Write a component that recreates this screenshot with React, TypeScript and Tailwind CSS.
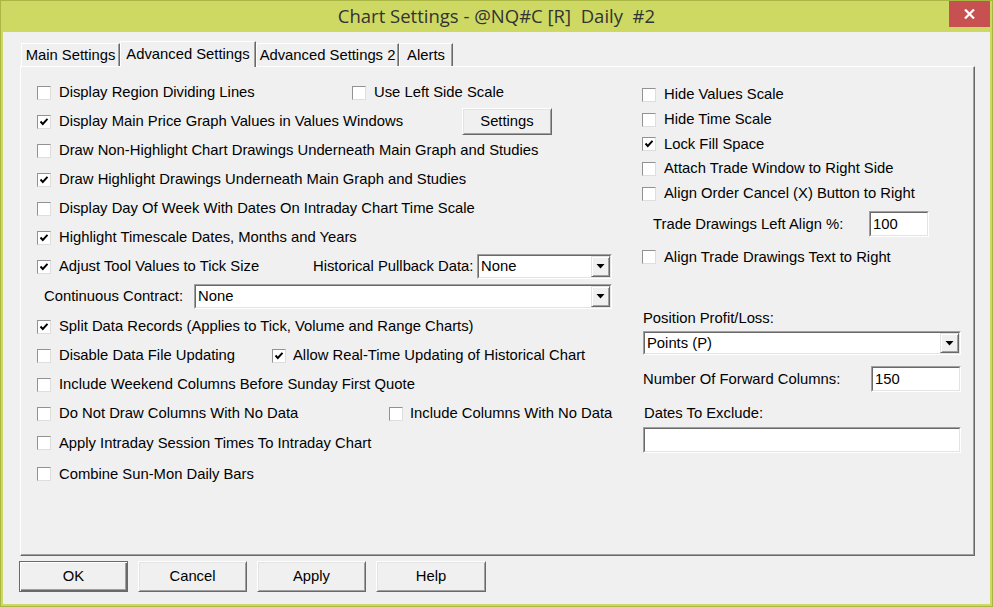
import React from "react";

const FONT = "font-['Liberation_Sans',Arial,sans-serif] text-[14.8px] text-black";

function Check({ checked = false }: { checked?: boolean }) {
  return (
    <span className="w-[14px] h-[14px] shrink-0 bg-white border border-t-[#929292] border-l-[#929292] border-r-[#dedede] border-b-[#dedede] flex items-center justify-center">
      {checked && (
        <svg width="12" height="12" viewBox="0 0 12 12">
          <polyline points="2.5,5.5 4.8,8 9.5,2.8" fill="none" stroke="#000" strokeWidth="1.9" />
        </svg>
      )}
    </span>
  );
}

function CheckLabel({ checked = false, label, gap = "gap-[8px]" }: { checked?: boolean; label: string; gap?: string }) {
  return (
    <div className={`flex items-center ${gap} whitespace-nowrap`}>
      <Check checked={checked} />
      <span>{label}</span>
    </div>
  );
}

function Sunken({ className = "", children }: { className?: string; children?: React.ReactNode }) {
  return (
    <div className={`border border-t-[#a0a0a0] border-l-[#a0a0a0] border-r-white border-b-white ${className}`}>
      <div className="w-full h-full border border-t-[#696969] border-l-[#696969] border-r-[#e3e3e3] border-b-[#e3e3e3] bg-white flex items-center">
        {children}
      </div>
    </div>
  );
}

function Select({ value, className = "" }: { value: string; className?: string }) {
  return (
    <Sunken className={className}>
      <span className="flex-1 pl-[2px] whitespace-nowrap">{value}</span>
      <span className="w-[19px] h-full bg-[#f0f0f0] border border-t-[#e3e3e3] border-l-[#e3e3e3] border-r-[#696969] border-b-[#696969] shadow-[inset_1px_1px_0_#fff,inset_-1px_-1px_0_#a0a0a0] flex items-center justify-center">
        <svg width="9" height="5" viewBox="0 0 9 5">
          <polygon points="0.5,0 8.5,0 4.5,4.5" fill="#000" />
        </svg>
      </span>
    </Sunken>
  );
}

function TextBox({ value = "", className = "" }: { value?: string; className?: string }) {
  return (
    <Sunken className={className}>
      <span className="pl-[2px] whitespace-nowrap">{value}</span>
    </Sunken>
  );
}

function Btn({ label, def = false, className = "" }: { label: string; def?: boolean; className?: string }) {
  return (
    <button
      className={`${className} bg-[#f0f0f0] flex items-center justify-center ${
        def
          ? "border border-[#6a6a6a] shadow-[inset_1px_1px_0_#fff,inset_-1px_-1px_0_#696969,inset_-2px_-2px_0_#a0a0a0]"
          : "border border-t-white border-l-white border-r-[#696969] border-b-[#696969] shadow-[inset_1px_1px_0_#e3e3e3,inset_-1px_-1px_0_#a0a0a0]"
      }`}
    >
      {label}
    </button>
  );
}

function Tab({ label, w, selected = false }: { label: string; w: string; selected?: boolean }) {
  return selected ? (
    <div
      className={`${w} h-[26px] mb-[-1px] relative z-10 bg-[#f0f0f0] border-t border-l border-t-white border-l-white border-r border-r-[#696969] shadow-[inset_-1px_0_0_#a0a0a0] flex items-center justify-center whitespace-nowrap`}
    >
      {label}
    </div>
  ) : (
    <div
      className={`${w} h-[23px] bg-[#f0f0f0] border-t border-l border-t-white border-l-white border-r border-r-[#696969] shadow-[inset_-1px_0_0_#a0a0a0] flex items-center justify-center whitespace-nowrap pt-[1px]`}
    >
      {label}
    </div>
  );
}

export default function App() {
  return (
    <div className={`w-[993px] h-[607px] bg-[#cdd963] border border-[#aab644] flex flex-col ${FONT}`}>
      {/* Title bar */}
      <div className="h-[31px] flex shrink-0">
        <div className="w-[43px]" />
        <div className="flex-1 flex items-center justify-center font-['Open_Sans',sans-serif] text-[18.5px] text-[#333333] whitespace-pre pb-[1px]">
          Chart Settings - @NQ#C [R]  Daily  #2
        </div>
        <div className="w-[43px] flex items-start">
          <div className="w-[41px] h-[26px] bg-[#c75050] flex items-center justify-center">
            <svg width="11" height="10" viewBox="0 0 11 10">
              <line x1="1" y1="0.5" x2="10" y2="9.5" stroke="#fff" strokeWidth="2.2" />
              <line x1="10" y1="0.5" x2="1" y2="9.5" stroke="#fff" strokeWidth="2.2" />
            </svg>
          </div>
        </div>
      </div>

      {/* Client */}
      <div className="flex-1 mx-[2px] mb-[2px] bg-[#f0f0f0] flex flex-col">
        {/* Tabs */}
        <div className="flex items-end pt-[9px] ml-[18px]">
          <Tab label="Main Settings" w="w-[99px]" />
          <Tab label="Advanced Settings" w="w-[136px]" selected />
          <Tab label="Advanced Settings 2" w="w-[143px]" />
          <Tab label="Alerts" w="w-[54px]" />
        </div>

        {/* Panel */}
        <div className="ml-[17px] w-[955px] h-[490px] border border-t-white border-l-white border-r-[#696969] border-b-[#696969] shadow-[inset_-1px_-1px_0_#a0a0a0] flex">
          {/* Left column */}
          <div className="w-[621px] pl-[16px] pt-[11px] flex flex-col">
            <div className="h-[29px] flex items-center">
              <div className="w-[315px]">
                <CheckLabel label="Display Region Dividing Lines" />
              </div>
              <CheckLabel label="Use Left Side Scale" />
            </div>
            <div className="h-[29px] flex items-center">
              <div className="w-[425px]">
                <CheckLabel checked label="Display Main Price Graph Values in Values Windows" />
              </div>
              <Btn label="Settings" className="w-[90px] h-[27px]" />
            </div>
            <div className="h-[29px] flex items-center">
              <CheckLabel label="Draw Non-Highlight Chart Drawings Underneath Main Graph and Studies" />
            </div>
            <div className="h-[29px] flex items-center">
              <CheckLabel checked label="Draw Highlight Drawings Underneath Main Graph and Studies" />
            </div>
            <div className="h-[29px] flex items-center">
              <CheckLabel label="Display Day Of Week With Dates On Intraday Chart Time Scale" />
            </div>
            <div className="h-[29px] flex items-center">
              <CheckLabel checked label="Highlight Timescale Dates, Months and Years" />
            </div>
            <div className="h-[29px] flex items-center">
              <div className="w-[276px]">
                <CheckLabel checked label="Adjust Tool Values to Tick Size" />
              </div>
              <span className="w-[164px] whitespace-nowrap">Historical Pullback Data:</span>
              <Select value="None" className="w-[135px] h-[25px]" />
            </div>
            <div className="h-[31px] flex items-center">
              <span className="ml-[7px] w-[150px] whitespace-nowrap">Continuous Contract:</span>
              <Select value="None" className="w-[418px] h-[25px]" />
            </div>
            <div className="h-[29px] flex items-center">
              <CheckLabel checked label="Split Data Records (Applies to Tick, Volume and Range Charts)" />
            </div>
            <div className="h-[29px] flex items-center">
              <div className="w-[235px]">
                <CheckLabel label="Disable Data File Updating" />
              </div>
              <CheckLabel checked label="Allow Real-Time Updating of Historical Chart" gap="gap-[7px]" />
            </div>
            <div className="h-[29px] flex items-center">
              <CheckLabel label="Include Weekend Columns Before Sunday First Quote" />
            </div>
            <div className="h-[29px] flex items-center">
              <div className="w-[352px]">
                <CheckLabel label="Do Not Draw Columns With No Data" />
              </div>
              <CheckLabel label="Include Columns With No Data" gap="gap-[7px]" />
            </div>
            <div className="h-[30px] flex items-center">
              <CheckLabel label="Apply Intraday Session Times To Intraday Chart" />
            </div>
            <div className="h-[32px] flex items-center">
              <CheckLabel label="Combine Sun-Mon Daily Bars" />
            </div>
          </div>

          {/* Right column */}
          <div className="w-[319px] pt-[15px] flex flex-col">
            <div className="h-[25px] flex items-center">
              <CheckLabel label="Hide Values Scale" />
            </div>
            <div className="h-[25px] flex items-center">
              <CheckLabel label="Hide Time Scale" />
            </div>
            <div className="h-[24px] flex items-center">
              <CheckLabel checked label="Lock Fill Space" />
            </div>
            <div className="h-[25px] flex items-center">
              <CheckLabel label="Attach Trade Window to Right Side" />
            </div>
            <div className="h-[25px] flex items-center">
              <CheckLabel label="Align Order Cancel (X) Button to Right" />
            </div>
            <div className="mt-[5px] h-[26px] flex items-center">
              <span className="ml-[11px] w-[216px] whitespace-nowrap">Trade Drawings Left Align %:</span>
              <TextBox value="100" className="w-[60px] h-[26px]" />
            </div>
            <div className="mt-[7px] h-[26px] flex items-center">
              <CheckLabel label="Align Trade Drawings Text to Right" />
            </div>
            <div className="mt-[39px] h-[18px] flex items-center">
              <span className="ml-[1px] whitespace-nowrap">Position Profit/Loss:</span>
            </div>
            <div className="mt-[4px] flex">
              <Select value="Points (P)" className="ml-[1px] w-[318px] h-[24px]" />
            </div>
            <div className="mt-[11px] h-[26px] flex items-center">
              <span className="ml-[1px] w-[228px] whitespace-nowrap">Number Of Forward Columns:</span>
              <TextBox value="150" className="w-[90px] h-[26px]" />
            </div>
            <div className="mt-[12px] h-[18px] flex items-center">
              <span className="ml-[2px] whitespace-nowrap">Dates To Exclude:</span>
            </div>
            <div className="mt-[5px] flex">
              <TextBox className="ml-[1px] w-[318px] h-[26px]" />
            </div>
          </div>
        </div>

        {/* Buttons */}
        <div className="mt-[5px] ml-[16px] flex gap-[10px]">
          <Btn label="OK" def className="w-[109px] h-[31px]" />
          <Btn label="Cancel" className="w-[109px] h-[31px]" />
          <Btn label="Apply" className="w-[109px] h-[31px]" />
          <Btn label="Help" className="w-[110px] h-[31px]" />
        </div>
      </div>
    </div>
  );
}
